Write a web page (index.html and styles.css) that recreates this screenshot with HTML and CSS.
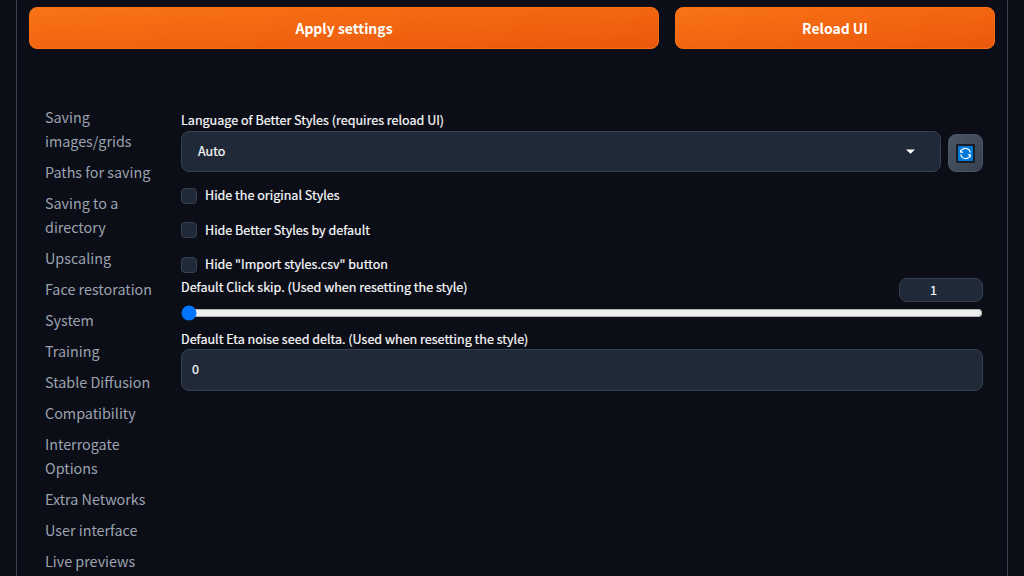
FILE: index.html
```html
<!DOCTYPE html>
<html lang="en">
<head>
<meta charset="utf-8">
<title>Settings</title>
<link rel="stylesheet" href="styles.css">
</head>
<body>
<div class="panel">
  <div class="actions">
    <button class="primary apply">Apply settings</button>
    <button class="primary reload">Reload UI</button>
  </div>
  <div class="content">
    <nav class="tabs">
      <a>Saving<br>images/grids</a>
      <a>Paths for saving</a>
      <a>Saving to a<br>directory</a>
      <a>Upscaling</a>
      <a>Face restoration</a>
      <a>System</a>
      <a>Training</a>
      <a>Stable Diffusion</a>
      <a>Compatibility</a>
      <a>Interrogate<br>Options</a>
      <a>Extra Networks</a>
      <a>User interface</a>
      <a>Live previews</a>
    </nav>
    <main class="form">
      <div class="label lang-label"><span>Language of Better Styles (requires reload UI)</span></div>
      <div class="language">
        <div class="select"><span>Auto</span>
          <svg class="caret" width="9" height="5" viewBox="0 0 9 5"><path d="M0 .5h9L4.5 4.8z" fill="#fff"/></svg>
        </div>
        <button class="refresh" aria-label="Refresh">
          <svg width="19" height="19" viewBox="0 0 19 19">
            <rect width="19" height="19" rx="1" fill="#171c27"/>
            <rect x="2" y="2" width="15" height="15" fill="#0078d7"/>
            <g fill="none" stroke="#fff" stroke-width="1.1">
              <path d="M5.4 6.4A5 5 0 0 1 14.3 8.6"/>
              <path d="M13.6 12.6A5 5 0 0 1 4.7 10.4"/>
            </g>
            <path d="M4.1 5.2v3.6h3.4zM14.9 13.8v-3.6h-3.4z" fill="#fff"/>
          </svg>
        </button>
      </div>
      <div class="checks">
        <label class="check"><input type="checkbox"><span>Hide the original Styles</span></label>
        <label class="check middle"><input type="checkbox"><span>Hide Better Styles by default</span></label>
        <label class="check"><input type="checkbox"><span>Hide "Import styles.csv" button</span></label>
      </div>
      <div class="slider-head">
        <div class="label"><span>Default Click skip. (Used when resetting the style)</span></div>
        <div class="number">1</div>
      </div>
      <input class="slider" type="range" min="1" max="12" value="1">
      <div class="label eta"><span>Default Eta noise seed delta. (Used when resetting the style)</span></div>
      <div class="field">0</div>
    </main>
  </div>
</div>
</body>
</html>
```
FILE: styles.css
```css
* { box-sizing: border-box; }
body {
  margin: 0;
  height: 576px;
  overflow: hidden;
  padding: 0 16px;
  background: #0b0d17;
  color: #f9fafb;
  font-family: "Noto Sans CJK SC", "Noto Sans", sans-serif;
}
button { font-family: inherit; }
.panel {
  height: 576px;
  overflow: hidden;
  padding: 7px 12px 0;
  border: solid #374151;
  border-width: 0 1px;
}
.actions { display: flex; gap: 16px; }
.primary {
  height: 42px;
  padding: 0;
  border: 1px solid #f97316;
  border-radius: 8px;
  background: linear-gradient(to bottom right, #f97316, #ea580c);
  color: #fff;
  font-size: 13.95px;
  font-weight: 700;
}
.apply { width: 630px; }
.reload { width: 320px; }
.content { display: flex; padding: 56px 12px 0 16px; }
.tabs {
  display: flex;
  flex-direction: column;
  flex: none;
  width: 136px;
  gap: 7px;
  color: #9ca3af;
  font-size: 14.35px;
  line-height: 24px;
  white-space: nowrap;
}
.form {
  flex: 1;
  display: flex;
  flex-direction: column;
  padding-top: 5px;
  font-size: 12.56px;
  font-weight: 400;
  -webkit-text-stroke: 0.2px currentColor;
}
.label { height: 21px; line-height: 20px; white-space: nowrap; }
.language { display: flex; align-items: flex-end; gap: 7px; }
.select {
  display: flex;
  justify-content: space-between;
  align-items: center;
  width: 760px;
  height: 41px;
  padding: 0 25px 0 16px;
  border: 1px solid #374151;
  border-radius: 8px;
  background: #1f2937;
}
.select span { line-height: 20px; padding-bottom: 1px; }
.refresh {
  display: flex;
  align-items: center;
  justify-content: center;
  width: 35px;
  height: 38px;
  padding: 0;
  border: 1px solid #4b5563;
  border-radius: 8px;
  background: linear-gradient(to bottom right, #4b5563, #374151);
}
.checks { display: grid; grid-template-rows: 34px 35px 20px; align-items: start; padding-top: 13px; }
.check { display: flex; align-items: center; gap: 8px; height: 20px; line-height: 20px; }
.check span { padding-bottom: 1px; }
.middle span { padding: 1px 0 0; }
.check input {
  appearance: none;
  width: 16px;
  height: 16px;
  margin: 2px 0 0;
  border: 1px solid #374151;
  border-radius: 4px;
  background: #1f2937;
}
.slider-head { display: flex; justify-content: space-between; height: 28px; padding-top: 3px; }
.slider-head .label { line-height: 20px; }
.number {
  width: 84px;
  height: 24px;
  margin-top: 1px;
  padding-right: 15px;
  border: 1px solid #374151;
  border-radius: 8px;
  background: #1f2937;
  line-height: 22px;
  text-align: center;
}
.slider { width: 802px; height: 16px; margin: 3px 0 0; }
.eta { margin-top: 7px; line-height: 22px; }
.field {
  height: 42px;
  padding-left: 10px;
  border: 1px solid #374151;
  border-radius: 8px;
  background: #1f2937;
  line-height: 38px;
}
```
